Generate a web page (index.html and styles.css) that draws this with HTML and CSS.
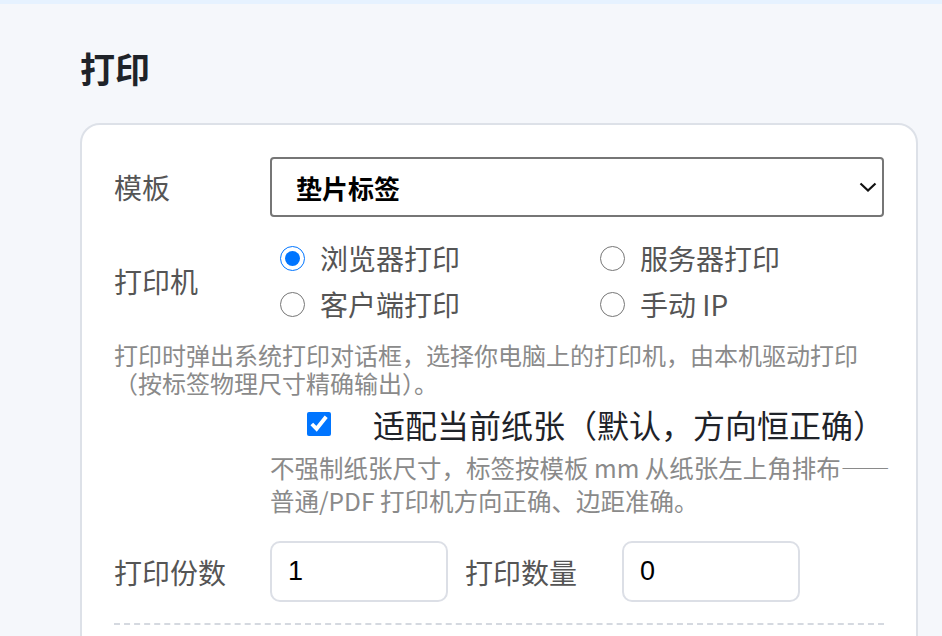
FILE: index.html
```html
<!DOCTYPE html>
<html lang="zh-CN">
<head>
  <meta charset="UTF-8">
  <meta name="viewport" content="width=device-width, initial-scale=1.0">
  <title>打印</title>
  <link rel="stylesheet" href="styles.css">
</head>
<body>
  <div class="top-bar"></div>

  <div class="page">
    <h1 class="page-title">打印</h1>

    <div class="print-card">
      <div class="form-row">
        <label class="form-label">模板</label>
        <div class="select-wrap">
          <select class="template-select">
            <option>垫片标签</option>
          </select>
          <svg class="select-arrow" width="18" height="10" viewBox="0 0 18 10">
            <path d="M1.5 1.5 L9 8.5 L16.5 1.5" fill="none" stroke="#111" stroke-width="2.2"/>
          </svg>
        </div>
      </div>

      <div class="form-row printer-row">
        <label class="form-label">打印机</label>
        <div class="radio-grid">
          <label class="radio-item"><input type="radio" name="printer" checked> 浏览器打印</label>
          <label class="radio-item"><input type="radio" name="printer"> 服务器打印</label>
          <label class="radio-item"><input type="radio" name="printer"> 客户端打印</label>
          <label class="radio-item"><input type="radio" name="printer"> 手动 IP</label>
        </div>
      </div>

      <p class="help-text">打印时弹出系统打印对话框，选择你电脑上的打印机，由本机驱动打印（按标签物理尺寸精确输出）。</p>

      <label class="fit-option">
        <input type="checkbox" checked>
        <span>适配当前纸张（默认，方向恒正确）</span>
      </label>
      <p class="fit-help">不强制纸张尺寸，标签按模板 mm 从纸张左上角排布——普通/PDF 打印机方向正确、边距准确。</p>

      <div class="form-row count-row">
        <label class="form-label">打印份数</label>
        <input class="num-input" type="text" value="1">
        <label class="form-label second-label">打印数量</label>
        <input class="num-input" type="text" value="0">
      </div>

      <div class="divider"></div>
    </div>
  </div>
</body>
</html>
```

FILE: styles.css
```css
body {
  margin: 0;
  background-color: #f5f7fb;
  font-family: "Noto Sans CJK SC", "Noto Sans", sans-serif;
  color: #555;
  overflow: hidden;
}

.top-bar {
  height: 4px;
  background-color: #e6f2ff;
}

.page {
  padding: 40px 24px 0 80px;
}

.page-title {
  margin: 0 0 31px;
  font-size: 35px;
  line-height: 48px;
  font-weight: 700;
  color: #1f2329;
}

.print-card {
  background: #ffffff;
  border: 2px solid #dde1e8;
  border-radius: 20px;
  padding: 32px 32px 40px;
}

.form-row {
  display: flex;
  align-items: center;
}

.form-label {
  width: 156px;
  flex-shrink: 0;
  font-size: 28px;
  line-height: 40px;
  color: #555;
}

.select-wrap {
  position: relative;
  flex: 1;
}

.template-select {
  width: 100%;
  height: 60px;
  appearance: none;
  -webkit-appearance: none;
  background: #ffffff;
  border: 2px solid #767676;
  border-radius: 4px;
  padding: 0 24px;
  font-family: inherit;
  font-size: 26px;
  font-weight: 700;
  color: #000;
}

.select-arrow {
  position: absolute;
  right: 7px;
  top: 25px;
}

.printer-row {
  margin-top: 18px;
}

.radio-grid {
  display: grid;
  grid-template-columns: 320px 320px;
}

.radio-item {
  display: flex;
  align-items: center;
  height: 46px;
  padding-left: 10px;
  font-size: 28px;
  color: #555;
}

.radio-item input {
  width: 25px;
  height: 25px;
  margin: 0 15px 0 0;
}

.help-text {
  margin: 14px 0 0;
  font-size: 24px;
  line-height: 28px;
  color: #8a8a8a;
}

.fit-option {
  display: flex;
  align-items: center;
  height: 48px;
  margin-top: 3px;
  padding-left: 193px;
  font-size: 32px;
  color: #1f2329;
}

.fit-option input {
  width: 24px;
  height: 24px;
  margin: 0 42px 0 0;
}

.fit-help {
  margin: 3px -20px 0 156px;
  font-size: 24.5px;
  line-height: 33px;
  color: #8a8a8a;
}

.count-row {
  margin-top: 24px;
}

.num-input {
  width: 178px;
  height: 61px;
  box-sizing: border-box;
  border: 2px solid #dcdfe6;
  border-radius: 10px;
  padding: 0 16px;
  font-family: "Liberation Sans", sans-serif;
  font-size: 27px;
  color: #000;
}

.second-label {
  width: 157px;
  margin-left: 17px;
}

.divider {
  margin-top: 21px;
  border-top: 2px dashed #d5d9e0;
}
```
